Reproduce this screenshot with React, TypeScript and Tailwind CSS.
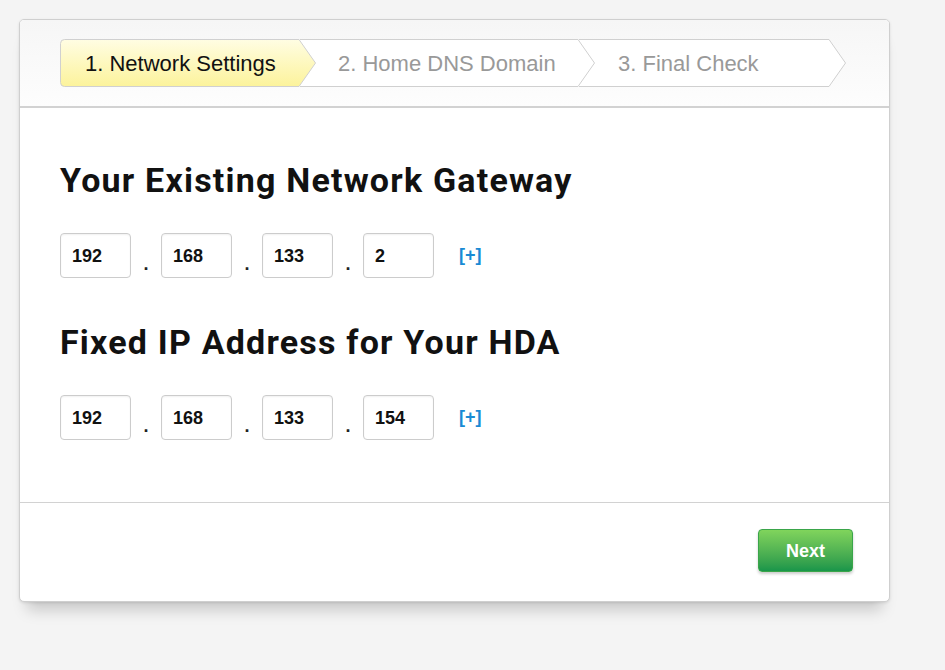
import React from 'react';

const steps = [
  { label: '1. Network Settings', width: 256, pad: 25, active: true },
  { label: '2. Home DNS Domain', width: 295, pad: 38, active: false },
  { label: '3. Final Check', width: 267, pad: 39, active: false },
];

const Step = ({ label, width, pad, active, first, z }: { label: string; width: number; pad: number; active: boolean; first: boolean; z: number }) => {
  const w = width;
  const tip = 17;
  const fillPath = first
    ? `M4.5,0.5 H${w - tip} L${w - 0.5},24 L${w - tip},47.5 H4.5 Q0.5,47.5 0.5,43.5 V4.5 Q0.5,0.5 4.5,0.5 Z`
    : `M0,0.5 H${w - tip} L${w - 0.5},24 L${w - tip},47.5 H0 Z`;
  const strokePath = first
    ? fillPath
    : `M0,0.5 H${w - tip} L${w - 0.5},24 L${w - tip},47.5 H0`;
  return (
    <div
      className={`relative h-[48px] flex items-center shrink-0 ${first ? '' : '-ml-[16px]'}`}
      style={{ width: w, zIndex: z, paddingLeft: pad }}
    >
      <svg className="absolute inset-0" width={w} height={48} viewBox={`0 0 ${w} 48`}>
        <defs>
          <linearGradient id="yel" x1="0" y1="0" x2="0" y2="1">
            <stop offset="0" stopColor="#fffde3" />
            <stop offset="1" stopColor="#fcf39b" />
          </linearGradient>
        </defs>
        <path d={fillPath} fill={active ? 'url(#yel)' : '#ffffff'} />
        <path d={strokePath} fill="none" stroke="#d0d0d0" strokeWidth="1" />
      </svg>
      <span className={`relative text-[22px] font-['Liberation_Sans',Arial,sans-serif] ${active ? 'text-[#111]' : 'text-[#999]'}`}>
        {label}
      </span>
    </div>
  );
};

const IpRow = ({ parts }: { parts: string[] }) => (
  <div className="flex items-center">
    {parts.map((p, i) => (
      <React.Fragment key={i}>
        {i > 0 && (
          <span className="w-[30px] text-center text-[18px] font-bold text-[#222] pt-[16px] leading-none">.</span>
        )}
        <div className="w-[71px] h-[45px] border border-[#ccc] rounded-[4px] bg-white flex items-center pl-[11px] pt-[1px] text-[18px] font-bold text-[#111] shadow-[inset_0_1px_2px_rgba(0,0,0,0.06)]">
          {p}
        </div>
      </React.Fragment>
    ))}
    <span className="ml-[25px] text-[18px] font-bold text-[#1a8ad4]">[+]</span>
  </div>
);

export default function App() {
  return (
    <div className="min-h-[670px] bg-[#f4f4f4] pt-[19px] pl-[19px] font-['Liberation_Sans',Arial,sans-serif]">
      <div className="w-[871px] h-[583px] bg-white border border-[#cfcfcf] rounded-[5px] shadow-[0_16px_14px_-8px_rgba(0,0,0,0.18),0_1px_3px_rgba(0,0,0,0.1)] flex flex-col overflow-hidden">
        <div className="bg-gradient-to-b from-[#f6f6f6] to-[#fdfdfd] border-b-2 border-[#d2d2d2] pt-[19px] pb-[19px] pl-[40px] flex">
          {steps.map((s, i) => (
            <Step key={s.label} {...s} first={i === 0} z={10 - i} />
          ))}
        </div>
        <div className="flex-1 px-[40px] pt-[52px] border-b border-[#d2d2d2]">
          <h1 className="font-['Roboto',sans-serif] font-bold text-[34px] leading-[40px] tracking-[1.2px] text-[#111] mb-[33px]">
            Your Existing Network Gateway
          </h1>
          <IpRow parts={['192', '168', '133', '2']} />
          <h2 className="font-['Roboto',sans-serif] font-bold text-[34px] leading-[40px] tracking-[1.2px] text-[#111] mt-[44px] mb-[33px]">
            Fixed IP Address for Your HDA
          </h2>
          <IpRow parts={['192', '168', '133', '154']} />
        </div>
        <div className="h-[98px] flex justify-end items-start pt-[26px] pr-[36px]">
          <button className="w-[95px] h-[43px] rounded-[4px] border border-[#3aa54a] bg-gradient-to-b from-[#80d45c] to-[#17964a] text-white text-[18px] font-bold pt-[1px] shadow-[0_2px_3px_rgba(0,0,0,0.2)]">
            Next
          </button>
        </div>
      </div>
    </div>
  );
}
